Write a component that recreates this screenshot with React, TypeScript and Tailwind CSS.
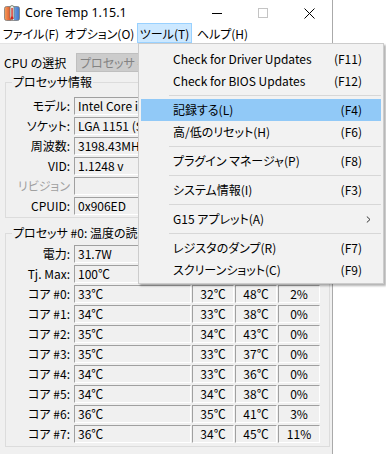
import React from "react";

const fieldCls =
  "h-[18px] bg-[#f0f0f0] border border-t-[#a0a0a0] border-l-[#a0a0a0] border-r-white border-b-white flex items-center text-[12px] leading-[16px] overflow-hidden whitespace-nowrap";

function AppIcon() {
  return (
    <svg width="16" height="16" viewBox="0 0 16 16">
      <defs>
        <linearGradient id="lg" x1="0" y1="0" x2="1" y2="0">
          <stop offset="0" stopColor="#f4a25e" />
          <stop offset="0.4" stopColor="#e2532a" />
          <stop offset="0.45" stopColor="#ffffff" />
          <stop offset="0.6" stopColor="#ffffff" />
          <stop offset="0.65" stopColor="#6f9fe0" />
          <stop offset="1" stopColor="#3f73c7" />
        </linearGradient>
      </defs>
      <rect x="0.5" y="1.5" width="15" height="14" rx="2" fill="url(#lg)" stroke="#7a7a7a" strokeWidth="0.8" />
      <rect x="6" y="0.5" width="4" height="14" rx="2" fill="#e9ece6" stroke="#6e7b6a" strokeWidth="0.8" />
      <rect x="7.4" y="3" width="1.3" height="10" fill="#d8231d" />
      <circle cx="8" cy="13" r="1.4" fill="#d8231d" />
    </svg>
  );
}

function Row({ label, children, gray }: { label: string; children: React.ReactNode; gray?: boolean }) {
  return (
    <div className="flex items-center h-[18px]">
      <div className={`w-[64px] text-right whitespace-nowrap text-[12px] leading-[16px] ${gray ? "text-[#a0a0a0]" : "text-black"}`}>
        {label}
      </div>
      <div className="ml-[4px] flex-1 flex gap-[1px] h-[18px]">{children}</div>
    </div>
  );
}

const cores = [
  ["33℃", "32℃", "48℃", "2%"],
  ["34℃", "33℃", "38℃", "0%"],
  ["35℃", "34℃", "43℃", "0%"],
  ["35℃", "33℃", "37℃", "0%"],
  ["34℃", "33℃", "36℃", "0%"],
  ["34℃", "34℃", "38℃", "0%"],
  ["36℃", "35℃", "41℃", "3%"],
  ["36℃", "34℃", "45℃", "11%"],
];

type MenuEntry = { sep: true } | { label: string; key?: string; sub?: boolean; hi?: boolean };

const menu: MenuEntry[] = [
  { label: "Check for Driver Updates", key: "(F11)" },
  { label: "Check for BIOS Updates", key: "(F12)" },
  { sep: true },
  { label: "記録する(L)", key: "(F4)", hi: true },
  { label: "高/低のリセット(H)", key: "(F6)" },
  { sep: true },
  { label: "プラグイン マネージャ(P)", key: "(F8)" },
  { sep: true },
  { label: "システム情報(I)", key: "(F3)" },
  { sep: true },
  { label: "G15 アプレット(A)", sub: true },
  { sep: true },
  { label: "レジスタのダンプ(R)", key: "(F7)" },
  { label: "スクリーンショット(C)", key: "(F9)" },
];

export default function App() {
  return (
    <div className="relative w-[386px] h-[454px] bg-white overflow-hidden font-['Noto_Sans_CJK_JP',sans-serif] [font-feature-settings:'palt'] text-[12px] text-black">
      {/* Window */}
      <div className="w-[333px] h-[454px] border-r border-[#aaaaaa] flex flex-col">
        {/* Title bar */}
        <div className="h-[23px] bg-white flex items-start pt-[3px]">
          <div className="ml-[4px] mt-[2px]">
            <AppIcon />
          </div>
          <span className="ml-[5px] text-[12.5px] leading-[20px] font-['Noto_Sans',sans-serif]">Core Temp 1.15.1</span>
          <div className="ml-auto flex h-[20px]">
            <div className="w-[46px] h-[20px] flex items-center justify-center">
              <div className="w-[10px] h-px bg-black" />
            </div>
            <div className="w-[46px] h-[20px] flex items-center justify-center">
              <div className="w-[10px] h-[10px] border border-[#c4c4c4]" />
            </div>
            <div className="w-[46px] h-[20px] flex items-center justify-center">
              <svg width="11" height="11" viewBox="0 0 11 11">
                <path d="M0.5 0.5 L10.5 10.5 M10.5 0.5 L0.5 10.5" stroke="#000" strokeWidth="1" />
              </svg>
            </div>
          </div>
        </div>
        {/* Menu bar */}
        <div className="h-[20px] bg-white flex text-[12px]">
          <div className="w-[62px] flex items-center justify-center pt-[1px]">ファイル(F)</div>
          <div className="w-[75px] flex items-center justify-center pt-[1px]">オプション(O)</div>
          <div className="w-[55px] flex items-center justify-center pt-[1px] bg-[#cce8ff] border border-[#99d1ff]">ツール(T)</div>
          <div className="w-[61px] flex items-center justify-center pt-[1px]">ヘルプ(H)</div>
        </div>
        {/* Client */}
        <div className="flex-1 bg-[#f0f0f0] border-t border-[#e4e4e4] flex flex-col pt-[9px]">
          <div className="flex items-center h-[19px]">
            <div className="w-[76px] pl-[4px] whitespace-nowrap leading-[16px]">CPU の選択</div>
            <div className="w-[160px] h-[19px] bg-[#cccccc] border border-[#bfbfbf] flex items-center pl-[3px] text-[#838383] leading-[16px] whitespace-nowrap">
              プロセッサ #0
            </div>
          </div>

          {/* Group 1 */}
          <div className="relative ml-[5px] mr-[2px] mt-[10px] border border-[#dcdcdc] pt-[14px] pb-[2px] flex flex-col gap-[2px]">
            <div className="absolute left-[6px] -top-[9px] px-[1px] bg-[#f0f0f0] leading-[16px] whitespace-nowrap">プロセッサ情報</div>
            <Row label="モデル:">
              <div className={`${fieldCls} flex-1 mr-[5px] pl-[3px]`}>Intel Core i9</div>
            </Row>
            <Row label="ソケット:">
              <div className={`${fieldCls} flex-1 mr-[5px] pl-[3px]`}>LGA 1151 (So</div>
            </Row>
            <Row label="周波数:">
              <div className={`${fieldCls} flex-1 mr-[5px] pl-[3px]`}>3198.43MHz</div>
            </Row>
            <Row label="VID:">
              <div className={`${fieldCls} flex-1 mr-[5px] pl-[3px]`}>1.1248 v</div>
            </Row>
            <Row label="リビジョン" gray>
              <div className={`${fieldCls} flex-1 mr-[5px] pl-[3px]`}></div>
            </Row>
            <Row label="CPUID:">
              <div className={`${fieldCls} flex-1 mr-[5px] pl-[3px]`}>0x906ED</div>
            </Row>
          </div>

          {/* Group 2 */}
          <div className="relative ml-[5px] mr-[2px] mt-[15px] border border-[#dcdcdc] pt-[11px] pb-[3px] flex flex-col gap-[2px]">
            <div className="absolute left-[6px] -top-[9px] px-[1px] bg-[#f0f0f0] leading-[16px] whitespace-nowrap">プロセッサ #0: 温度の読み</div>
            <Row label="電力:">
              <div className={`${fieldCls} w-[117px] pl-[3px]`}>31.7W</div>
            </Row>
            <Row label="Tj. Max:">
              <div className={`${fieldCls} w-[117px] pl-[3px]`}>100℃</div>
            </Row>
            {cores.map((c, i) => (
              <Row key={i} label={`コア #${i}:`}>
                <div className={`${fieldCls} w-[117px] pl-[3px]`}>{c[0]}</div>
                <div className={`${fieldCls} w-[42px] justify-center`}>{c[1]}</div>
                <div className={`${fieldCls} w-[42px] justify-center`}>{c[2]}</div>
                <div className={`${fieldCls} w-[42px] justify-center`}>{c[3]}</div>
              </Row>
            ))}
          </div>
        </div>
      </div>

      {/* Dropdown menu */}
      <div className="absolute left-[138px] top-[43px] w-[246px] border border-[#cccccc] bg-[#f2f2f2] pt-[4px] pb-[2px] shadow-[2px_2px_2px_rgba(0,0,0,0.3)]">
        {menu.map((m, i) =>
          "sep" in m ? (
            <div key={i} className="h-[7px] flex items-center pl-[30px] pr-[2px]">
              <div className="h-px flex-1 bg-[#d7d7d7]" />
            </div>
          ) : (
            <div
              key={i}
              className={`h-[22px] mx-[2px] flex items-center pl-[32px] ${m.sub ? "pr-[10px]" : "pr-[19px]"} ${m.hi ? "bg-[#91c9f7]" : ""}`}
            >
              <span className="whitespace-nowrap leading-[16px]">{m.label}</span>
              <span className="ml-auto whitespace-nowrap leading-[16px]">
                {m.sub ? (
                  <svg width="5" height="7" viewBox="0 0 5 7">
                    <path d="M0.8 0.5 L4 3.5 L0.8 6.5" fill="none" stroke="#333" strokeWidth="1" />
                  </svg>
                ) : (
                  m.key
                )}
              </span>
            </div>
          )
        )}
      </div>
    </div>
  );
}
